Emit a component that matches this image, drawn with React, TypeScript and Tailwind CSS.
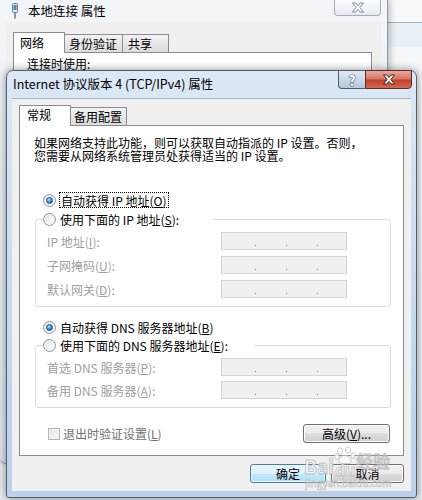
import React from "react";

const cjk = "font-['Noto_Sans_CJK_SC','Noto_Sans',sans-serif]";

function Radio({ checked }: { checked?: boolean }) {
  return (
    <span className="flex h-[13px] w-[13px] shrink-0 items-center justify-center rounded-full border border-[#8c969e] bg-linear-to-br from-[#d9dde0] via-[#f2f2f2] to-white shadow-[inset_0_0_0_1px_#f4f4f4]">
      {checked && (
        <span className="h-[7px] w-[7px] rounded-full border border-[#1d4f86] bg-[radial-gradient(circle_at_35%_30%,#c4e8ff_0%,#3e9ce6_45%,#0d4f94_100%)]" />
      )}
    </span>
  );
}

function IpBox() {
  return (
    <div className="flex h-[18px] w-[126px] items-end gap-[30px] border border-[#d4d4d4] bg-[#f0f0f0] pb-[3px] pl-[33px]">
      <span className="h-px w-px bg-[#7a7a7a]" />
      <span className="h-px w-px bg-[#7a7a7a]" />
      <span className="h-px w-px bg-[#7a7a7a]" />
    </div>
  );
}

function Btn({ children, className, primary }: { children: React.ReactNode; className: string; primary?: boolean }) {
  return (
    <button
      className={
        primary
          ? `flex h-[19px] items-center justify-center rounded-[3px] border border-[#3c7fb1] bg-[linear-gradient(#ecf7fd_0%,#dcf1fc_50%,#c4e8fc_50%,#b2def6_100%)] text-[12px] leading-none text-black shadow-[inset_0_0_0_1px_#f4fbff] ${className}`
          : `flex h-[19px] items-center justify-center rounded-[3px] border border-[#707070] bg-[linear-gradient(#f2f2f2_0%,#ebebeb_50%,#dddddd_50%,#cfcfcf_100%)] text-[12px] leading-none text-black shadow-[inset_0_0_0_1px_#fbfbfb] ${className}`
      }
    >
      {children}
    </button>
  );
}

function CloseX({ fill, stroke }: { fill: string; stroke: string }) {
  return (
    <svg width="14" height="11" viewBox="0 0 14 11">
      <path
        d="M1.5 1h3.2l2.3 2.6L9.3 1h3.2L8.8 5.5l3.7 4.5H9.3L7 7.4 4.7 10H1.5l3.7-4.5z"
        fill={fill}
        stroke={stroke}
        strokeWidth="1"
        strokeLinejoin="round"
      />
    </svg>
  );
}

function PlugIcon() {
  return (
    <svg width="8" height="16" viewBox="0 0 8 16">
      <rect x="1.5" y="0.5" width="5" height="9" rx="1" fill="#dfe8f2" stroke="#6b7c8e" />
      <rect x="2.5" y="2" width="3" height="5" fill="#4c86c6" />
      <rect x="3" y="9.5" width="2" height="6" fill="#8794a3" />
    </svg>
  );
}

function BackWindow() {
  return (
    <div className="absolute left-0 top-0 flex h-[464px] w-[388px] flex-col rounded-b-[6px] border-r border-b border-[#8e9caa] bg-linear-to-b from-[#f3f6f9] to-[#dbe4ee] px-[6px] pb-[6px] shadow-[2px_0_6px_rgba(0,0,0,0.25)]">
      <div className="flex h-[22px] items-center gap-[9px] pl-[5px]">
        <PlugIcon />
        <span className="text-[12.5px] leading-none text-black">本地连接 属性</span>
      </div>
      <div className="absolute right-[6px] top-0 flex h-[16px] w-[47px] items-center justify-center rounded-b-[4px] border border-t-0 border-[#a2adb9] bg-linear-to-b from-[#fbfcfd] to-[#e6ebf0]">
        <CloseX fill="#ffffff" stroke="#7d8796" />
      </div>
      <div className="flex flex-1 flex-col bg-[#f0f0f0] pl-[7px] pr-[9px] pt-[10px]">
        <div className="flex h-[20px] items-end">
          <div className="relative z-10 -mb-px flex h-[21px] w-[52px] items-center border border-b-0 border-[#898c95] bg-white pl-[6px] text-[12px] leading-none">
            网络
          </div>
          <div className="flex h-[18px] w-[58px] items-center border border-b-0 border-l-0 border-[#898c95] bg-linear-to-b from-[#f3f3f3] to-[#dcdcdc] pl-[4px] text-[12px] leading-none">
            身份验证
          </div>
          <div className="flex h-[18px] w-[46px] items-center border border-b-0 border-l-0 border-[#898c95] bg-linear-to-b from-[#f3f3f3] to-[#dcdcdc] pl-[5px] text-[12px] leading-none">
            共享
          </div>
        </div>
        <div className="flex-1 border border-[#898c95] bg-white pl-[13px] pt-[5px] text-[12px] leading-none">
          连接时使用:
        </div>
      </div>
    </div>
  );
}

function Watermark() {
  return (
    <div className="pointer-events-none absolute left-[304px] top-[446px] h-[44px] w-[92px] opacity-80">
      <span className="absolute left-0 top-[10px] text-[19px] font-bold leading-none text-white [-webkit-text-stroke:1px_#b8b8b8]">
        Bai
      </span>
      <svg className="absolute left-[30px] top-0" width="22" height="18" viewBox="0 0 22 18">
        <g fill="#ffffff" stroke="#bdbdbd" strokeWidth="1">
          <ellipse cx="6" cy="5" rx="2.5" ry="3.2" />
          <ellipse cx="14" cy="4" rx="2.5" ry="3.2" />
          <ellipse cx="2.8" cy="10.5" rx="2.2" ry="2.8" />
          <ellipse cx="19" cy="9.5" rx="2.2" ry="2.8" />
          <path d="M5 16c0-4 3-6.5 6-6.5s6 2.5 6 6.5c0 1.5-2 1.5-6 1.5s-6 0-6-1.5z" />
        </g>
      </svg>
      <span className="absolute left-[31px] top-[15px] text-[16px] font-bold leading-none text-white [-webkit-text-stroke:1px_#b8b8b8]">
        du
      </span>
      <span className="absolute left-[52px] top-[6px] text-[17px] leading-none text-white [-webkit-text-stroke:1px_#b8b8b8]">
        经验
      </span>
      <span className="absolute left-[1px] top-[32px] text-[10px] leading-none text-white [-webkit-text-stroke:0.6px_#b8b8b8]">
        jingyan.baidu.com
      </span>
    </div>
  );
}

function FrontWindow() {
  return (
    <div className="absolute left-[6px] top-[70px] flex h-[428px] w-[411px] flex-col rounded-t-[7px] rounded-b-[3px] border border-[#4f5f72] bg-linear-to-b from-[#dce8f5] via-[#c8dbef] to-[#bad1e9] px-[5px] pb-[6px] shadow-[0_0_8px_rgba(0,0,0,0.45)]">
      <div className="flex h-[27px] shrink-0 items-center pl-px">
        <span className="text-[12.5px] leading-none text-black">Internet 协议版本 4 (TCP/IPv4) 属性</span>
      </div>
      <div className="absolute right-[4px] top-[-1px] flex h-[19px]">
        <div className="flex w-[27px] items-center justify-center rounded-bl-[4px] border border-r-0 border-[#4d5d70] bg-linear-to-b from-[#dfe9f4] to-[#b3c7dc] text-[14px] font-bold leading-none text-white [-webkit-text-stroke:1px_#44505e] [paint-order:stroke]">
          ?
        </div>
        <div className="flex w-[47px] items-center justify-center rounded-br-[4px] border border-[#5b2a24] bg-[linear-gradient(#e9a99c_0%,#d47767_45%,#c2402d_55%,#d26a55_100%)]">
          <CloseX fill="#ffffff" stroke="#3d2622" />
        </div>
      </div>

      <div className="flex flex-1 flex-col border-t border-[#9fb3c8] bg-[#f0f0f0] px-[7px] pt-[6px]">
        <div className="flex h-[20px] items-end">
          <div className="relative z-10 -mb-px flex h-[21px] w-[52px] items-center border border-b-0 border-[#898c95] bg-white pl-[7px] pb-[2px] text-[12px] leading-none">
            常规
          </div>
          <div className="flex h-[18px] w-[56px] items-center border border-b-0 border-l-0 border-[#898c95] bg-linear-to-b from-[#f3f3f3] to-[#dcdcdc] pl-[3px] text-[12px] leading-none">
            备用配置
          </div>
        </div>

        <div className="flex h-[331px] flex-col border border-[#898c95] bg-white pl-[15px] pr-[12px] pt-[10px] text-[12px] leading-[13px] text-black">
          <p className="-ml-px">
            如果网络支持此功能，则可以获取自动指派的 IP 设置。否则，
            <br />
            您需要从网络系统管理员处获得适当的 IP 设置。
          </p>

          <div className="mt-[30px] flex h-[16px] items-center gap-[3px] pl-[8px]">
            <Radio checked />
            <span className="flex h-[16px] items-center border border-dotted border-black px-px">
              自动获得 IP 地址(<u>O</u>)
            </span>
          </div>

          <fieldset className="mt-[3px] rounded-[3px] border border-[#d5dfe5] pb-[8px]">
            <legend className="ml-[7px] flex h-[16px] w-[170px] items-center gap-[4px] bg-white">
              <Radio />
              <span>使用下面的 IP 地址(<u>S</u>):</span>
            </legend>
            <div className="flex flex-col gap-[6px] pl-[11px] pt-[5px] text-[#a0a0a0]">
              <div className="flex h-[18px] items-center">
                <span className="w-[174px]">IP 地址(<u>I</u>):</span>
                <IpBox />
              </div>
              <div className="flex h-[18px] items-center">
                <span className="w-[174px]">子网掩码(<u>U</u>):</span>
                <IpBox />
              </div>
              <div className="flex h-[18px] items-center">
                <span className="w-[174px]">默认网关(<u>D</u>):</span>
                <IpBox />
              </div>
            </div>
          </fieldset>

          <div className="mt-[12px] flex h-[16px] items-center gap-[4px] pl-[8px]">
            <Radio checked />
            <span>自动获得 DNS 服务器地址(<u>B</u>)</span>
          </div>

          <fieldset className="mt-[2px] rounded-[3px] border border-[#d5dfe5] pb-[8px]">
            <legend className="ml-[7px] flex h-[16px] w-[212px] items-center gap-[4px] bg-white">
              <Radio />
              <span>使用下面的 DNS 服务器地址(<u>E</u>):</span>
            </legend>
            <div className="flex flex-col gap-[5px] pl-[11px] pt-[5px] text-[#a0a0a0]">
              <div className="flex h-[18px] items-center">
                <span className="w-[174px]">首选 DNS 服务器(<u>P</u>):</span>
                <IpBox />
              </div>
              <div className="flex h-[18px] items-center">
                <span className="w-[174px]">备用 DNS 服务器(<u>A</u>):</span>
                <IpBox />
              </div>
            </div>
          </fieldset>

          <div className="mt-[16px] flex h-[19px] items-center justify-between pl-[13px] pr-px">
            <div className="flex items-center gap-[3px] text-[#707070]">
              <span className="h-[12px] w-[12px] border border-[#b4b4b4] bg-linear-to-br from-[#e2e2e2] to-[#fafafa] shadow-[inset_0_0_0_1px_#f5f5f5]" />
              <span>退出时验证设置(<u>L</u>)</span>
            </div>
            <Btn className="w-[87px]">
              高级(<u>V</u>)...
            </Btn>
          </div>
        </div>

        <div className="mt-[8px] flex justify-end gap-[5px]">
          <Btn primary className="w-[76px]">
            确定
          </Btn>
          <Btn className="w-[73px]">取消</Btn>
        </div>
      </div>
    </div>
  );
}

export default function App() {
  return (
    <div className={`relative h-[500px] w-[422px] overflow-hidden bg-linear-to-b from-[#f7f9fa] to-[#e7ecf0] ${cjk}`}>
      <div className="absolute left-[388px] right-0 top-[22px] h-px bg-[#a9b2bb]" />
      <div className="absolute left-[388px] right-0 top-[23px] h-[24px] bg-[#eaf1f6]" />
      <BackWindow />
      <FrontWindow />
      <Watermark />
    </div>
  );
}
